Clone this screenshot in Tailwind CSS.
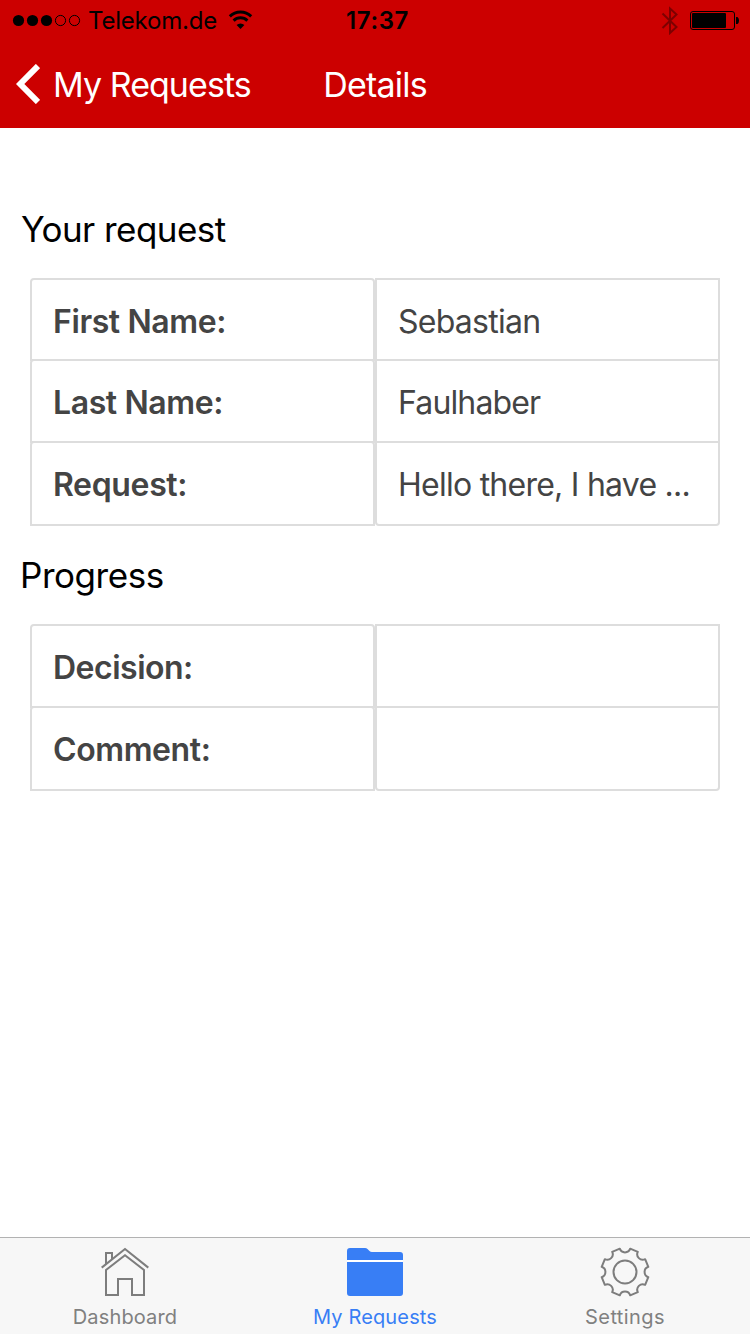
<!DOCTYPE html>
<html lang="en">
<head>
<meta charset="utf-8">
<title>Details</title>
<script src="https://cdn.jsdelivr.net/npm/@tailwindcss/browser@4"></script>
</head>
<body class="bg-white font-['Inter','Liberation_Sans',sans-serif]">
<div class="flex h-[1334px] w-[750px] flex-col overflow-hidden whitespace-nowrap">
  <header class="h-32 shrink-0 bg-[#cc0000]">
    <div class="grid h-10 grid-cols-3 items-center text-black">
      <div class="flex items-center pl-3">
        <svg class="h-4 w-[70px] shrink-0" viewBox="12 12 70 16"><g fill="#000"><circle cx="18.5" cy="20.5" r="5.6"/><circle cx="32.5" cy="20.5" r="5.6"/><circle cx="46.5" cy="20.5" r="5.6"/></g><g fill="none" stroke="#000"><circle cx="60.5" cy="20.5" r="5.1"/><circle cx="74.5" cy="20.5" r="5.1"/></g></svg>
        <span class="ml-1.5 w-[128px] shrink-0 pt-0.5 text-[24px] leading-7 tracking-[-0.2px]">Telekom.de</span>
        <svg class="ml-3 h-5 w-[26px] shrink-0" viewBox="228 10 26 20" fill="none" stroke="#000" stroke-width="3"><path d="M229.8 16.4a15.4 15.4 0 0 1 21.4 0"/><path d="M233.6 20.6a10 10 0 0 1 13.8 0"/><path d="M236.6 25a5.6 5.6 0 0 1 7.8 0l-3.9 4z" fill="#000" stroke="none"/></svg>
      </div>
      <div class="pt-0.5 pl-[5px] text-center text-[24px] leading-7 font-semibold tracking-[0.6px]">17:37</div>
      <div class="flex items-center justify-end pr-[10px]">
        <svg class="h-[30px] w-[80px] shrink-0" viewBox="660 5 80 30"><path d="M662.5 13.5l14 13.5-6.5 6V8.5l6.5 6-14 13.5" fill="none" stroke="#7d0000" stroke-width="2"/><rect x="690.5" y="11.5" width="44" height="18" rx="2.5" fill="none" stroke="#000"/><rect x="692" y="13" width="34" height="15" rx="1" fill="#000"/><path d="M736 17h1.5q1.5 1 1.5 3.5t-1.5 3.5H736z"/></svg>
      </div>
    </div>
    <div class="grid h-[88px] grid-cols-3 items-center text-[34px] leading-[44px] text-white">
      <div class="flex items-center pl-4">
        <svg class="h-10 w-6 shrink-0" viewBox="16 64 24 40" fill="none" stroke="#fff" stroke-width="6"><path d="M38 66L20.200 84 38 102"/></svg>
        <span class="ml-[13px] pt-0.5 tracking-[-0.95px]">My Requests</span>
      </div>
      <h1 class="pt-0.5 text-center tracking-[-0.8px]">Details</h1>
    </div>
  </header>

  <main class="grow pt-[79px]">
    <h2 class="h-[71px] pl-[21px] text-[35px] leading-[44px] tracking-[-0.55px] text-black">Your request</h2>
    <div class="mx-[30px] grid grid-cols-2 text-[32px] text-[#444]">
      <div class="h-[83px] rounded-t border-2 border-[#ddd] pl-[21px] leading-[83px] font-semibold tracking-[-0.4px]">First Name:</div>
      <div class="h-[83px] border-2 border-[#ddd] pl-[21px] leading-[83px] tracking-[-0.75px]">Sebastian</div>
      <div class="-mt-0.5 h-[84px] rounded-t border-2 border-[#ddd] pl-[21px] leading-[83px] font-semibold tracking-[-0.4px]">Last Name:</div>
      <div class="-mt-0.5 h-[84px] border-2 border-[#ddd] pl-[21px] leading-[83px] tracking-[-0.85px]">Faulhaber</div>
      <div class="-mt-0.5 h-[85px] rounded-t border-2 border-[#ddd] pl-[21px] leading-[83px] font-semibold tracking-[-0.35px]">Request:</div>
      <div class="-mt-0.5 h-[85px] rounded-b border-2 border-[#ddd] pl-[21px] leading-[83px] tracking-[-0.75px]">Hello there, I have ...</div>
    </div>
    <h2 class="mt-[27px] h-[71px] pl-5 text-[35px] leading-[44px] tracking-[-0.45px] text-black">Progress</h2>
    <div class="mx-[30px] grid grid-cols-2 text-[32px] text-[#444]">
      <div class="h-[84px] rounded-t border-2 border-[#ddd] pl-[21px] leading-[83px] font-semibold tracking-[-0.5px]">Decision:</div>
      <div class="h-[84px] border-2 border-[#ddd]"></div>
      <div class="-mt-0.5 h-[85px] rounded-t border-2 border-[#ddd] pl-[21px] leading-[83px] font-semibold tracking-[-0.4px]">Comment:</div>
      <div class="-mt-0.5 h-[85px] rounded-b border-2 border-[#ddd]"></div>
    </div>
  </main>

  <nav class="grid h-[97px] shrink-0 grid-cols-3 border-t border-[#b2b2b2] bg-[#f7f7f7] text-[20px] leading-6 text-[#808080]">
    <a class="flex flex-col items-center pt-2">
      <svg class="h-[52px] w-[50px]" viewBox="100 1246 50 52" fill="none" stroke="#7d7d7d" stroke-width="2"><path d="M101.7 1267.6L125 1249l23.300 18.600"/><path d="M106 1295v-25l19-14.800 19 14.800v25h-12v-16h-14v16z"/><path d="M106 1264v-11h6v6"/></svg>
      <span class="mt-[7px] tracking-[0.15px]">Dashboard</span>
    </a>
    <a class="flex flex-col items-center pt-2 text-[#387ef5]">
      <svg class="h-[52px] w-14" viewBox="347 1246 56 52"><path fill="#fff" d="M347 1259h56v4h-56z"/><path fill="#387ef5" d="M347 1260v-9q0-3 3-3h15q1.500 0 2.500 1l2 2q1 1 2.500 1h28q3 0 3 3v5zM347 1262h56v31q0 3-3 3h-50q-3 0-3-3z"/></svg>
      <span class="mt-[7px] tracking-[0.15px]">My Requests</span>
    </a>
    <a class="flex flex-col items-center pt-2">
      <svg class="h-[52px] w-[52px]" viewBox="-26 -26 52 52" fill="none" stroke="#7d7d7d" stroke-width="2" stroke-linejoin="round"><circle r="11.500"/><path d="M-5.200-23.300A5.500 5.500 0 0 0 5.200-23.300L12.800-20.150A5.500 5.500 0 0 0 20.150-12.800L23.300-5.200A5.500 5.500 0 0 0 23.300 5.200L20.150 12.800A5.500 5.500 0 0 0 12.800 20.150L5.200 23.300A5.500 5.500 0 0 0-5.200 23.300L-12.800 20.150A5.500 5.500 0 0 0-20.150 12.800L-23.300 5.200A5.500 5.500 0 0 0-23.300-5.200L-20.150-12.800A5.500 5.500 0 0 0-12.800-20.150Z"/></svg>
      <span class="mt-[7px] tracking-[0.4px]">Settings</span>
    </a>
  </nav>
</div>
</body>
</html>
